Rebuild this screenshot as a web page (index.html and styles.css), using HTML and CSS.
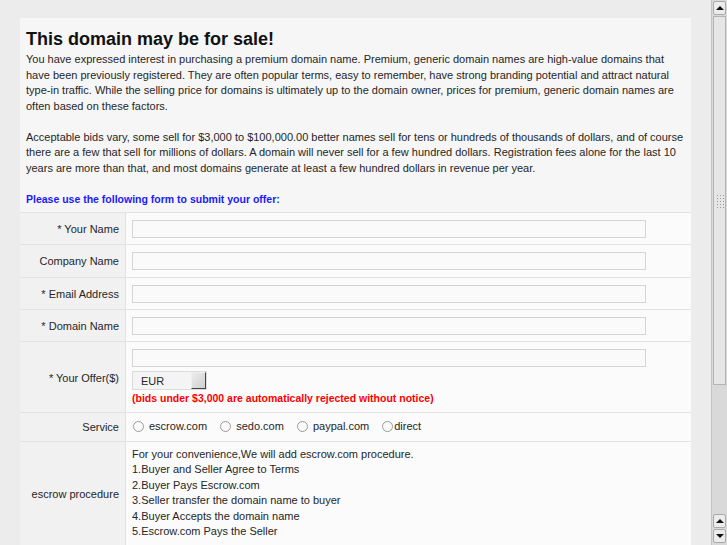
FILE: index.html
```html
<!DOCTYPE html>
<html lang="en">
<head>
    <meta charset="UTF-8">
    <title>This domain may be for sale!</title>
    <link rel="stylesheet" href="styles.css">
</head>
<body>
<div class="viewport">
    <div class="page">
        <div class="panel">
            <h1>This domain may be for sale!</h1>
            <p>You have expressed interest in purchasing a premium domain name. Premium, generic domain names are high-value domains that have been previously registered. They are often popular terms, easy to remember, have strong branding potential and attract natural type-in traffic. While the selling price for domains is ultimately up to the domain owner, prices for premium, generic domain names are often based on these factors.</p>
            <p>Acceptable bids vary, some sell for $3,000 to $100,000.00 better names sell for tens or hundreds of thousands of dollars, and of course there are a few that sell for millions of dollars. A domain will never sell for a few hundred dollars. Registration fees alone for the last 10 years are more than that, and most domains generate at least a few hundred dollars in revenue per year.</p>
            <p class="form-note">Please use the following form to submit your offer:</p>

            <table class="offer-form">
                <tr>
                    <th>* Your Name</th>
                    <td><input type="text" class="field"></td>
                </tr>
                <tr>
                    <th>Company Name</th>
                    <td><input type="text" class="field"></td>
                </tr>
                <tr>
                    <th>* Email Address</th>
                    <td><input type="text" class="field"></td>
                </tr>
                <tr>
                    <th>* Domain Name</th>
                    <td><input type="text" class="field"></td>
                </tr>
                <tr>
                    <th>* Your Offer($)</th>
                    <td>
                        <input type="text" class="field">
                        <div class="select">
                            <span class="select-value">EUR</span>
                            <span class="select-btn"></span>
                        </div>
                        <div class="warning">(bids under $3,000 are automatically rejected without notice)</div>
                    </td>
                </tr>
                <tr class="service-row">
                    <th>Service</th>
                    <td>
                        <label class="radio"><span class="dot"></span>escrow.com</label>
                        <label class="radio"><span class="dot"></span>sedo.com</label>
                        <label class="radio"><span class="dot"></span>paypal.com</label>
                        <label class="radio tight"><span class="dot"></span>direct</label>
                    </td>
                </tr>
                <tr class="escrow-row">
                    <th>escrow procedure</th>
                    <td>
                        For your convenience,We will add escrow.com procedure.<br>
                        1.Buyer and Seller Agree to Terms<br>
                        2.Buyer Pays Escrow.com<br>
                        3.Seller transfer the domain name to buyer<br>
                        4.Buyer Accepts the domain name<br>
                        5.Escrow.com Pays the Seller
                    </td>
                </tr>
            </table>
        </div>
    </div>

    <div class="scrollbar">
        <div class="sb-btn up"></div>
        <div class="sb-thumb"><span class="grip"></span></div>
        <div class="sb-track"></div>
        <div class="sb-btn up"></div>
        <div class="sb-btn down"></div>
    </div>
</div>
</body>
</html>
```

FILE: styles.css
```css
html, body {
    margin: 0;
    height: 100%;
}

body {
    font-family: 'Liberation Sans', Arial, sans-serif;
    font-size: 11px;
    color: #262626;
    background: #ececec;
    overflow: hidden;
}

.viewport {
    display: flex;
    height: 545px;
}

.page {
    flex: 1;
    padding: 18px 20px 0;
    overflow: hidden;
}

.panel {
    background: #f6f6f6;
    padding: 8px 0 0;
}

h1 {
    font-size: 18px;
    font-weight: bold;
    color: #111;
    margin: 0 6px;
    line-height: 26px;
}

p {
    margin: 0 6px 15.5px;
    line-height: 15.5px;
}

.form-note {
    color: #1a1aff;
    font-weight: bold;
    font-size: 10.5px;
    margin-bottom: 5px;
}

.offer-form {
    width: 100%;
    border-collapse: collapse;
}

.offer-form th,
.offer-form td {
    border-top: 1px solid #e2e2e2;
    padding: 7px 6px 6.25px;
    vertical-align: middle;
}

.offer-form th {
    width: 93px;
    text-align: right;
    font-weight: normal;
    background: #f1f1f1;
    border-right: 1px solid #e2e2e2;
}

.offer-form td {
    background: #fbfbfb;
    padding-left: 6px;
}

.field {
    display: block;
    width: 514px;
    height: 18px;
    box-sizing: border-box;
    margin: 0;
    border: 1px solid #d4d4d4;
    background: #fafafa;
}

.select {
    display: flex;
    width: 75px;
    height: 19px;
    box-sizing: border-box;
    margin-top: 4px;
    border: 1px solid #dcdcdc;
    background: #f4f4f4;
    align-items: center;
}

.select-value {
    flex: 1;
    padding-left: 8px;
}

.select-btn {
    width: 15px;
    height: 17px;
    box-sizing: border-box;
    background: linear-gradient(135deg, #ececec, #cfcfcf);
    border: 1px solid #eee;
    border-right-color: #444;
    border-bottom-color: #444;
}

.warning {
    color: #f00;
    font-weight: bold;
    font-size: 10.5px;
    line-height: 15px;
    margin-top: 1px;
}

.service-row th,
.service-row td {
    padding-top: 7px;
    padding-bottom: 7px;
}

.radio {
    display: inline-flex;
    align-items: center;
    margin-right: 9px;
}

.dot {
    width: 11px;
    height: 11px;
    box-sizing: border-box;
    border: 1px solid #9a9a9a;
    border-radius: 50%;
    background: #fafafa;
    margin: 0 5px 0 1px;
}

.radio.tight .dot {
    margin-right: 1px;
}

.escrow-row td {
    line-height: 15.5px;
    padding-top: 5px;
    padding-bottom: 5px;
}

.scrollbar {
    width: 16px;
    display: flex;
    flex-direction: column;
    background: #d9d9d9;
    border-left: 1px solid #c4c4c4;
    box-sizing: border-box;
    padding: 1px 1px;
}

.sb-btn {
    height: 14px;
    background: #ececec;
    border: 1px solid #aaa;
    border-radius: 2px;
    box-sizing: border-box;
    display: flex;
    align-items: center;
    justify-content: center;
    margin-bottom: 1px;
}

.sb-btn::after {
    content: "";
    border-left: 4px solid transparent;
    border-right: 4px solid transparent;
}

.sb-btn.up::after {
    border-bottom: 4px solid #111;
}

.sb-btn.down::after {
    border-top: 4px solid #111;
}

.sb-thumb {
    height: 369px;
    background: #e6e6e6;
    border: 1px solid #b4b4b4;
    box-sizing: border-box;
    display: flex;
    align-items: center;
    justify-content: center;
}

.grip {
    width: 8px;
    height: 14px;
    background-image: radial-gradient(#999 0.8px, transparent 1px);
    background-size: 3px 3px;
}

.sb-track {
    flex: 1;
}
```
